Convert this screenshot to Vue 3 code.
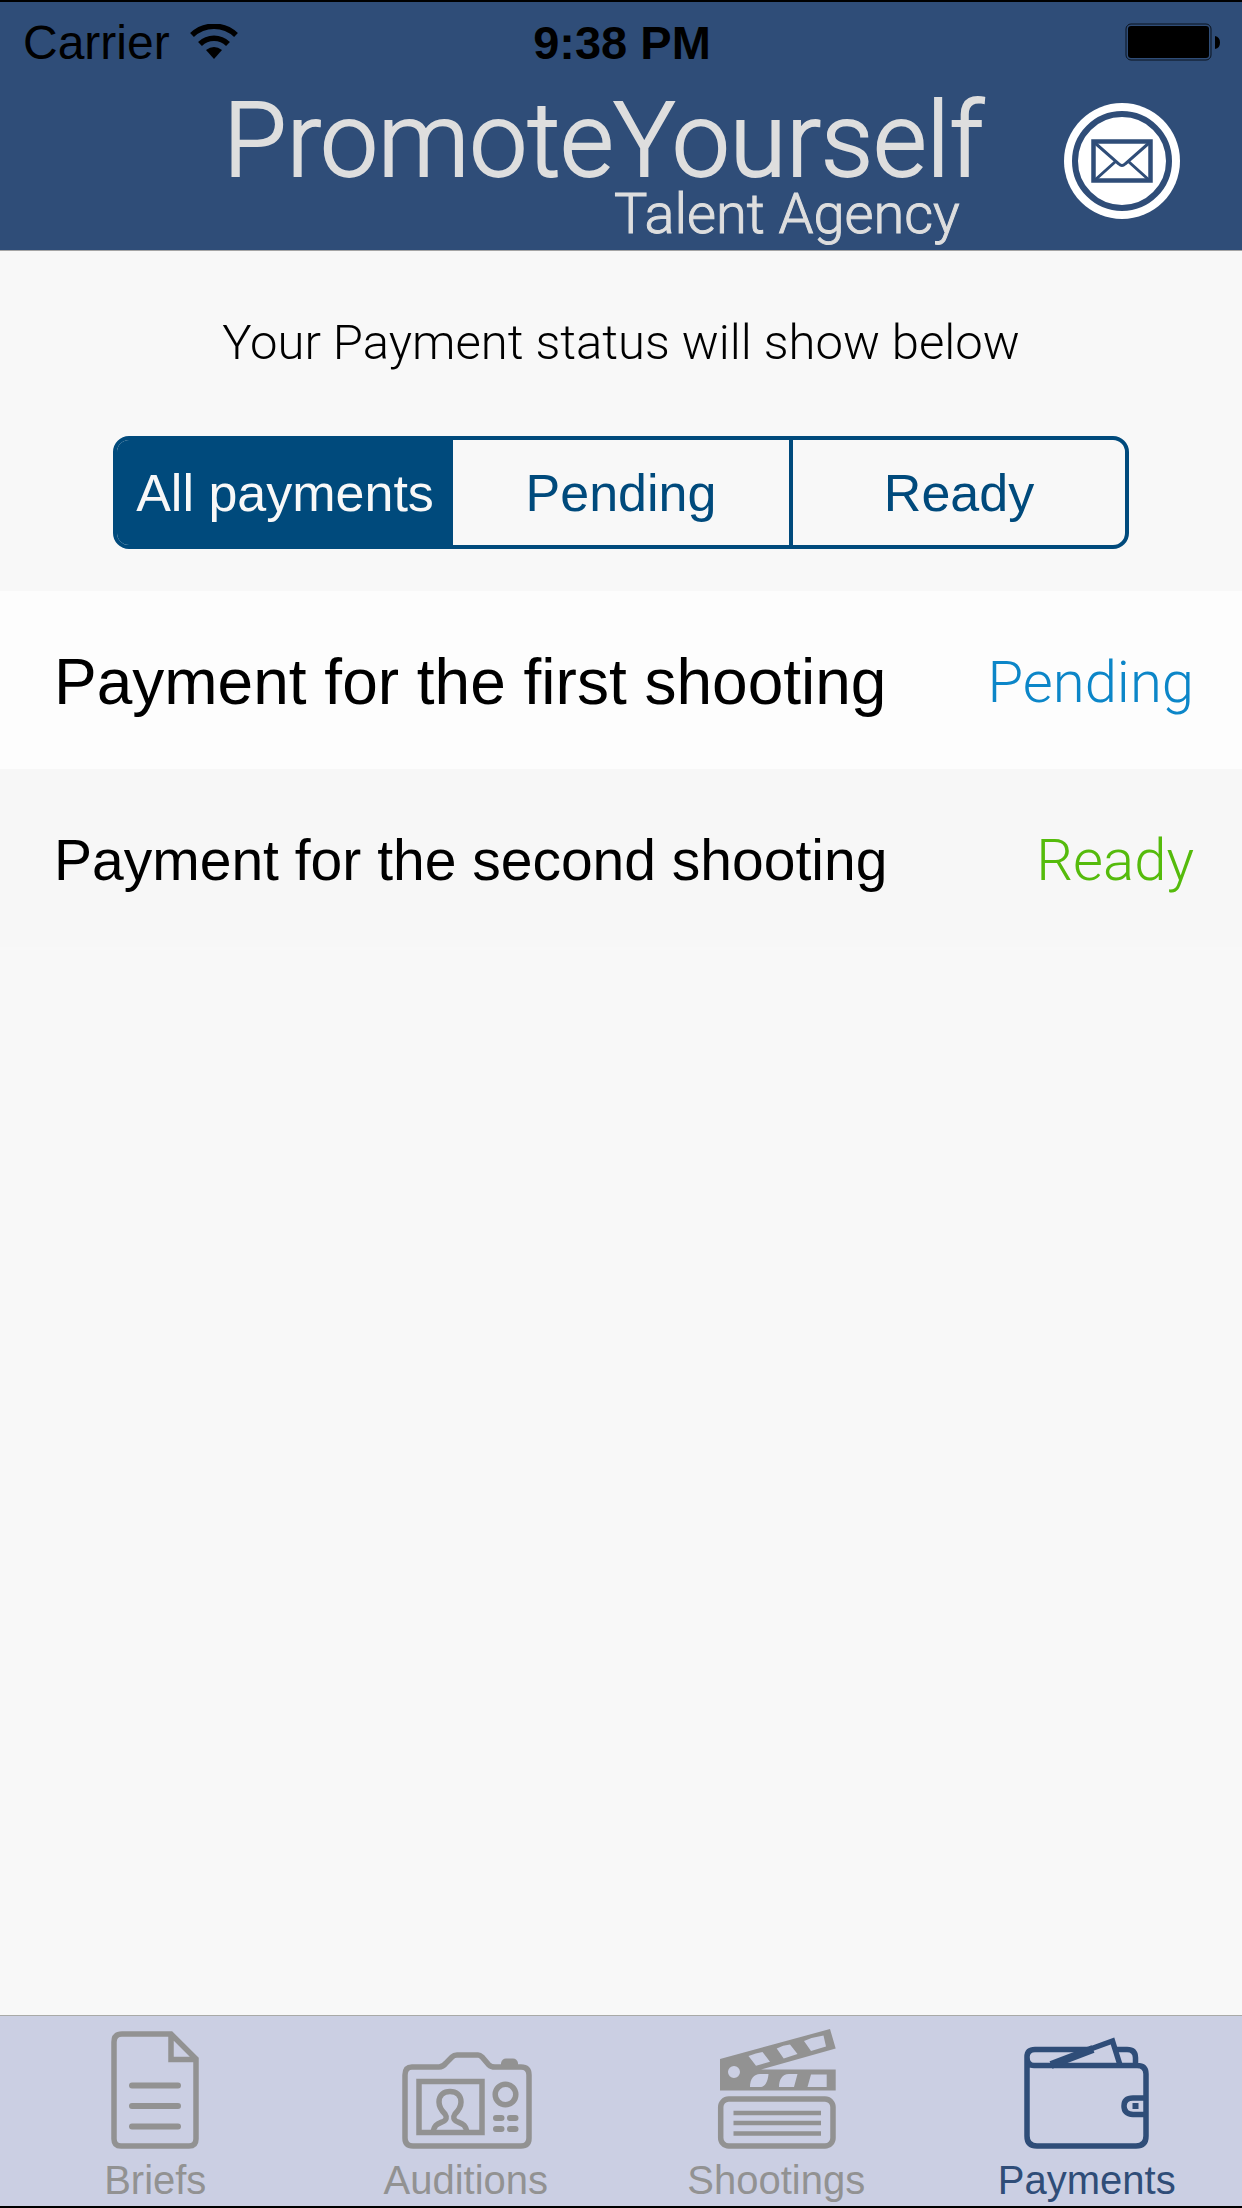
<template>
  <div class="app">
    <header class="header">
      <div class="status-bar">
        <div class="carrier">
          <span>Carrier</span>
          <svg class="wifi" viewBox="0 0 48 36" aria-hidden="true">
            <path d="M2 11A32 32 0 0 1 46 11M10 20A20 20 0 0 1 38 20" fill="none" stroke="#000" stroke-width="5.500" />
            <path d="M16 26Q24 20 32 26L24 35Z" />
          </svg>
        </div>
        <time class="time">9:38 PM</time>
        <svg class="battery" viewBox="0 0 96 38" aria-hidden="true">
          <rect x="1" y="1" width="85" height="36" rx="5" fill="none" stroke="#0b121c" stroke-width="1" />
          <rect x="3" y="3" width="81" height="32" rx="3" />
          <path d="M90 13Q95 14 95 19.500T90 26Z" />
        </svg>
      </div>

      <div class="brand-bar">
        <h1 class="brand">
          <span class="brand-name">PromoteYourself</span>
          <span class="brand-sub">Talent Agency</span>
        </h1>
        <button class="mail" type="button" aria-label="Messages">
          <svg viewBox="0 0 116 116" aria-hidden="true">
            <circle cx="58" cy="58" r="58" fill="#fff" />
            <g fill="none" stroke="#2f4d78">
              <circle cx="58" cy="58" r="47" stroke-width="6" />
              <rect x="29.500" y="38.500" width="57" height="39" stroke-width="4.500" />
              <path d="M31 40L55 61Q58 64 61 61L85 40M31 77L51 59M85 77L65 59" stroke-width="3" />
            </g>
          </svg>
        </button>
      </div>
    </header>

    <main class="content">
      <p class="intro">Your Payment status will show below</p>

      <div class="segments" role="group" aria-label="Payment filter">
        <button
          v-for="f in filters"
          :key="f.label"
          type="button"
          class="segment"
          :class="{ active: f.status === filter }"
          :aria-pressed="f.status === filter"
          @click="filter = f.status"
        >{{ f.label }}</button>
      </div>

      <ul class="payments">
        <li v-for="p in visible" :key="p.title" class="payment" :class="p.status">
          <span class="payment-title">{{ p.title }}</span>
          <span class="payment-status">{{ p.label }}</span>
        </li>
      </ul>
    </main>

    <nav class="tabs">
      <a href="#briefs" class="tab">
        <svg viewBox="0 0 132 120" aria-hidden="true">
          <g class="line">
            <path d="M33 5H82L107 30V110Q107 117 100 117H32Q25 117 25 110V13Q25 5 33 5ZM82 5V30.500H107" />
            <path d="M43 56.500H89M43 77H89M43 97.500H89" stroke-width="6" stroke-linecap="round" />
          </g>
        </svg>
        <span>Briefs</span>
      </a>
      <a href="#auditions" class="tab">
        <svg viewBox="0 0 132 120" aria-hidden="true">
          <g class="line">
            <path d="M12 38H39Q43 38 46 34L52 28Q54 26 57 26H78Q80 26 82 28L89 36Q91 38 95 38H121Q129 38 129 46V109Q129 117 121 117H13Q5 117 5 109V46Q5 38 12 38Z" />
            <rect x="19" y="52.500" width="63" height="51" />
            <circle cx="105.500" cy="65.500" r="10.300" />
            <path d="M33 104C34 96 37 95 42 93C47 91 47 88 45 85C41 81 39 77 39 73C39 66 44 62.500 50 62.500S61 66 61 73C61 77 59 81 55 85C53 88 53 91 58 93C63 95 66 96 67 104" />
            <path d="M96 89H101.500M110 89H115.500M96 100H101.500M110 100H115.500" stroke-width="6" stroke-linecap="round" />
          </g>
          <path class="solid" d="M101 37V34Q102 29.500 106 29.500H113Q117 29.500 118 34V37Z" />
        </svg>
        <span>Auditions</span>
      </a>
      <a href="#shootings" class="tab">
        <svg viewBox="0 0 132 120" aria-hidden="true">
          <path
            class="solid"
            fill-rule="evenodd"
            d="M10 30L120 0L125.700 19.500L51 40.500H125.700V61.500H10Z
               M18 43a6 6 0 1 0 12 0a6 6 0 1 0-12 0Z
               M38.500 27Q46 24 52.500 23L60 32.700L46 36.700Z
               M66.700 19.500Q73 16 80 15.500L87.500 25L73.700 29.500Z
               M94 12Q103 8 113.500 6.500L116 17.500L101 22Z
               M40 58C40 50 44 45 50 45H58.500C58 51 56 58 50 58Z
               M69 58C69 51 72 45 79 45H87.500L84 58Z
               M101 45.500H116.700V58H97.500Z"
          />
          <g class="line">
            <rect x="10.700" y="70" width="112.300" height="47" rx="8" />
            <path d="M23.500 84H111M23.500 94H111M23.500 104.500H111" stroke-width="4.500" />
          </g>
        </svg>
        <span>Shootings</span>
      </a>
      <a href="#payments" class="tab current" aria-current="page">
        <svg viewBox="0 0 132 120" aria-hidden="true">
          <g class="line">
            <path d="M6 28V107Q6 117 16 117H115Q125 117 125 107V45Q125 36.500 116 36.500H13Q6 36.500 6 28Q6 20.500 14 20.500H67M94 20.500H106Q114.500 20.500 114.500 29V36" />
            <path d="M64 22L91.500 12L99 36M125 69H112Q103 69 103 77T112 85.500H125" />
            <path d="M30 36L72 20" stroke-width="8" />
          </g>
          <rect class="solid" x="111.500" y="74" width="6" height="6" />
        </svg>
        <span>Payments</span>
      </a>
    </nav>
  </div>
</template>

<script setup>
import { ref, computed } from 'vue'

const filters = [
  { label: 'All payments', status: 'all' },
  { label: 'Pending', status: 'pending' },
  { label: 'Ready', status: 'ready' }
]

const payments = [
  { title: 'Payment for the first shooting', status: 'pending', label: 'Pending' },
  { title: 'Payment for the second shooting', status: 'ready', label: 'Ready' }
]

const filter = ref('all')

const visible = computed(() =>
  filter.value === 'all' ? payments : payments.filter((p) => p.status === filter.value)
)
</script>

<style>
body {
  background: #f8f8f8;
}
</style>

<style scoped>
.app {
  box-sizing: border-box;
  min-height: 100vh;
  display: flex;
  flex-direction: column;
  border-top: 2px solid #000;
  border-bottom: 2px solid #000;
  background: #f8f8f8;
  color: #000;
  font-family: "Liberation Sans", Arial, sans-serif;
}

.header {
  background: #2f4d78;
  border-bottom: 1px solid #a5a5a5;
}

/* status bar */
.status-bar {
  display: grid;
  grid-template-columns: 1fr auto 1fr;
  align-items: center;
  height: 80px;
  padding: 0 21px 0 23px;
  font-size: 48px;
}

.carrier {
  display: flex;
  align-items: center;
  gap: 20px;
}

.wifi {
  width: 48px;
  height: 36px;
}

.time {
  font-size: 47px;
  font-weight: bold;
}

.battery {
  justify-self: end;
  width: 96px;
  height: 38px;
}

/* logo and mail button */
.brand-bar {
  display: grid;
  grid-template-columns: 1fr auto 1fr;
  align-items: start;
  height: 168px;
  padding: 0 62px;
}

.brand {
  grid-column: 2;
  display: flex;
  flex-direction: column;
  margin: 0;
  padding-right: 35px;
  color: #dedede;
  font-family: "Roboto", sans-serif;
  font-weight: 300;
  white-space: nowrap;
}

.brand-name {
  font-size: 103px;
  line-height: 118px;
  -webkit-text-stroke: 2px #dedede;
}

.brand-sub {
  padding-right: 24px;
  font-size: 56px;
  line-height: 28px;
  text-align: right;
  -webkit-text-stroke: 1px #dedede;
}

.mail {
  justify-self: end;
  width: 116px;
  height: 116px;
  margin-top: 21px;
  padding: 0;
  border: 0;
  border-radius: 50%;
  background: none;
}

.mail svg {
  display: block;
}

/* content */
.content {
  flex: 1;
}

.intro {
  margin: 60px 0 61px;
  font-family: "Roboto", sans-serif;
  font-size: 49px;
  font-weight: 300;
  line-height: 64px;
  text-align: center;
}

.segments {
  display: grid;
  grid-template-columns: repeat(3, 1fr);
  margin: 0 113px 42px;
  border: 4px solid #004a7c;
  border-radius: 16px;
  overflow: hidden;
}

.segment {
  height: 105px;
  padding: 0;
  border: 0;
  background: none;
  color: #004a7c;
  font-family: inherit;
  font-size: 52px;
  white-space: nowrap;
}

.segment:last-child {
  border-left: 4px solid #004a7c;
}

.segment.active {
  background: #004a7c;
  color: #f8f8f8;
}

.payments {
  margin: 0;
  padding: 0;
  list-style: none;
}

.payment {
  display: flex;
  align-items: center;
  justify-content: space-between;
  box-sizing: border-box;
  height: 178px;
  padding: 4px 48px 0 54px;
  background: #f7f7f7;
}

.payment:nth-child(odd) {
  background: #fdfdfd;
}

.payment-title {
  font-size: 57px;
}

.pending .payment-title {
  font-size: 64px;
}

.payment-status {
  font-family: "Roboto", sans-serif;
  font-size: 58px;
  font-weight: 300;
}

.pending .payment-status {
  color: #0c86c8;
}

.ready .payment-status {
  color: #55bb0c;
}

/* bottom tabs */
.tabs {
  display: grid;
  grid-template-columns: repeat(4, 1fr);
  border-top: 1px solid #a9aaa8;
  background: #cbcfe3;
}

.tab {
  display: flex;
  flex-direction: column;
  align-items: center;
  gap: 9px;
  padding: 13px 0 4px;
  color: #929292;
  font-size: 40px;
  line-height: 44px;
  text-decoration: none;
}

.tab.current {
  color: #2f4d78;
}

.tab svg {
  width: 132px;
  height: 120px;
}

.line {
  fill: none;
  stroke: currentColor;
  stroke-width: 5.500;
}

.solid {
  fill: currentColor;
}
</style>
